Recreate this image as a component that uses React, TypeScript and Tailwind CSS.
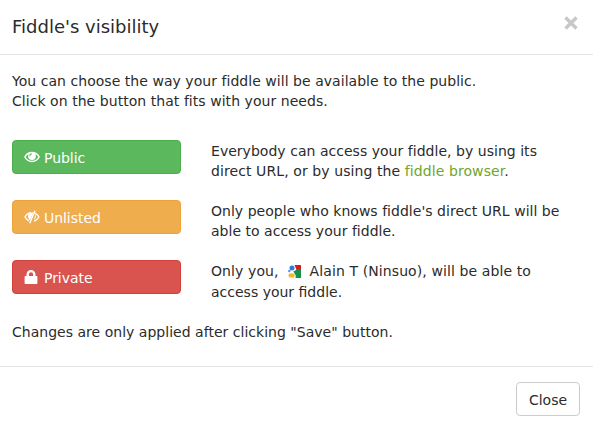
import React from "react";

function EyeIcon({ slashed = false }: { slashed?: boolean }) {
  return (
    <svg width="16" height="14" viewBox="0 0 16 14" className="-mr-px shrink-0" fill="none">
      {slashed ? (
        <>
          <path d="M7 2.600C4.300 3 2.100 4.800 1 7c.9 1.600 2.200 3.100 4 3.900M11 3.300c1.800.7 3.100 2.100 3.900 3.700-1 2-2.700 3.500-4.900 4.200" stroke="white" strokeWidth="1.400" />
          <path d="M9.600 2.200 5.900 10.200C4.200 9 3.600 6.500 4.300 4.300 5.600 2.900 7.500 2.200 9.600 2.200Z" fill="white" />
          <path d="M11 .7 5.700 13.300" stroke="white" strokeWidth="1.400" />
          <path d="M11.400 5.300c.2 1.300 0 2.400-.9 3.500" stroke="white" strokeWidth="1.100" />
        </>
      ) : (
        <>
          <path d="M.9 7C2.200 4.300 4.700 2.600 8 2.600S13.800 4.300 15.100 7C13.800 9.700 11.200 11.400 8 11.400S2.200 9.700.9 7Z" stroke="white" strokeWidth="1.500" />
          <circle cx="8" cy="6" r="3.900" fill="white" />
          <path d="M7.900 3.700C6.500 3.800 5.700 4.800 5.900 6.100" stroke="#5cb85c" strokeWidth="1.100" />
        </>
      )}
    </svg>
  );
}

function LockIcon() {
  return (
    <svg width="14" height="14" viewBox="0 0 14 14" className="shrink-0">
      <path d="M3.700 7V4.200a3.300 3.100 0 0 1 6.600 0V7" fill="none" stroke="white" strokeWidth="2.400" />
      <rect x=".6" y="6" width="12.800" height="8" rx=".8" fill="white" />
    </svg>
  );
}

function GoogleIcon() {
  return (
    <svg width="13" height="13" viewBox="0 0 13 13" className="ml-[9px] mr-[9px] inline-block align-[-2px]">
      <path d="M6.500 0h6q.5 0 .5.500V5H8.500Z" fill="#dc1629" />
      <path d="M8.500 4.500H13v8q0 .5-.5.500H7.500Z" fill="#159345" />
      <circle cx="4" cy="3" r="2.500" fill="#2f7bd9" />
      <circle cx="1.300" cy="6" r="1.300" fill="#5b9bea" />
      <ellipse cx="3.600" cy="10.400" rx="3.100" ry="2.200" fill="#f7b52c" />
      <path d="M5.300 6.500 9 4.500V12L7 9.200Z" fill="#159345" />
    </svg>
  );
}

const choices = [
  { name: "Public", style: "bg-[#5cb85c] border-[#4cae4c]", icon: <EyeIcon />, gap: "gap-[5px]" },
  { name: "Unlisted", style: "bg-[#f0ad4e] border-[#eea236]", icon: <EyeIcon slashed />, gap: "gap-[5px]" },
  { name: "Private", style: "bg-[#d9534f] border-[#d43f3a]", icon: <LockIcon />, gap: "gap-[6px]" },
];

const descriptions = [
  <>
    <p className="tracking-[0.03px]">Everybody can access your fiddle, by using its</p>
    <p className="tracking-[0.09px]">direct URL, or by using the <a className="text-[#6fa52b]">fiddle browser</a>.</p>
  </>,
  <>
    <p className="tracking-[0.03px]">Only people who knows fiddle's direct URL will be</p>
    <p className="tracking-[0.02px]">able to access your fiddle.</p>
  </>,
  <>
    <p className="tracking-[0.1px]">Only you,<GoogleIcon />Alain T (Ninsuo), will be able to</p>
    <p className="mt-px">access your fiddle.</p>
  </>,
];

export default function App() {
  return (
    <div className="h-[428px] w-[593px] overflow-hidden bg-white font-['DejaVu_Sans',sans-serif] text-[14px] leading-5 text-[#2b2b2b] whitespace-nowrap">
      <header className="flex h-[55px] justify-between border-b border-[#e5e5e5] pl-3 pr-[14px]">
        <h1 className="pt-[15px] text-[18px] leading-6">Fiddle's visibility</h1>
        <button aria-label="Dismiss" className="mt-[15px] h-4 w-4">
          <svg width="16" height="16" viewBox="0 0 16 16"><path d="m2.500 2.500 11 11M13.500 2.500l-11 11" stroke="#c8c8c8" strokeWidth="3.500" /></svg>
        </button>
      </header>
      <main className="h-[311px] px-3 pt-4">
        <p className="tracking-[0.04px]">You can choose the way your fiddle will be available to the public.</p>
        <p className="tracking-[0.05px]">Click on the button that fits with your needs.</p>
        <div className="mt-[29px] flex flex-col gap-[26px]">
          {choices.map((choice, index) => (
            <div key={choice.name} className="flex h-[34px] gap-[30px]">
              <button className={`flex h-[34px] w-[169px] shrink-0 items-center rounded-[4px] border pl-[11px] text-white ${choice.gap} ${choice.style}`}>
                {choice.icon}<span className="pt-px tracking-[-0.05px]">{choice.name}</span>
              </button>
              <div className="pt-px">{descriptions[index]}</div>
            </div>
          ))}
        </div>
        <p className="mt-7 tracking-[0.02px]">Changes are only applied after clicking "Save" button.</p>
      </main>
      <footer className="flex justify-end border-t border-[#e5e5e5] pr-[13px] pt-[15px]">
        <button className="h-[34px] w-16 rounded-[4px] border border-[#ccc] bg-white pt-px">Close</button>
      </footer>
    </div>
  );
}
